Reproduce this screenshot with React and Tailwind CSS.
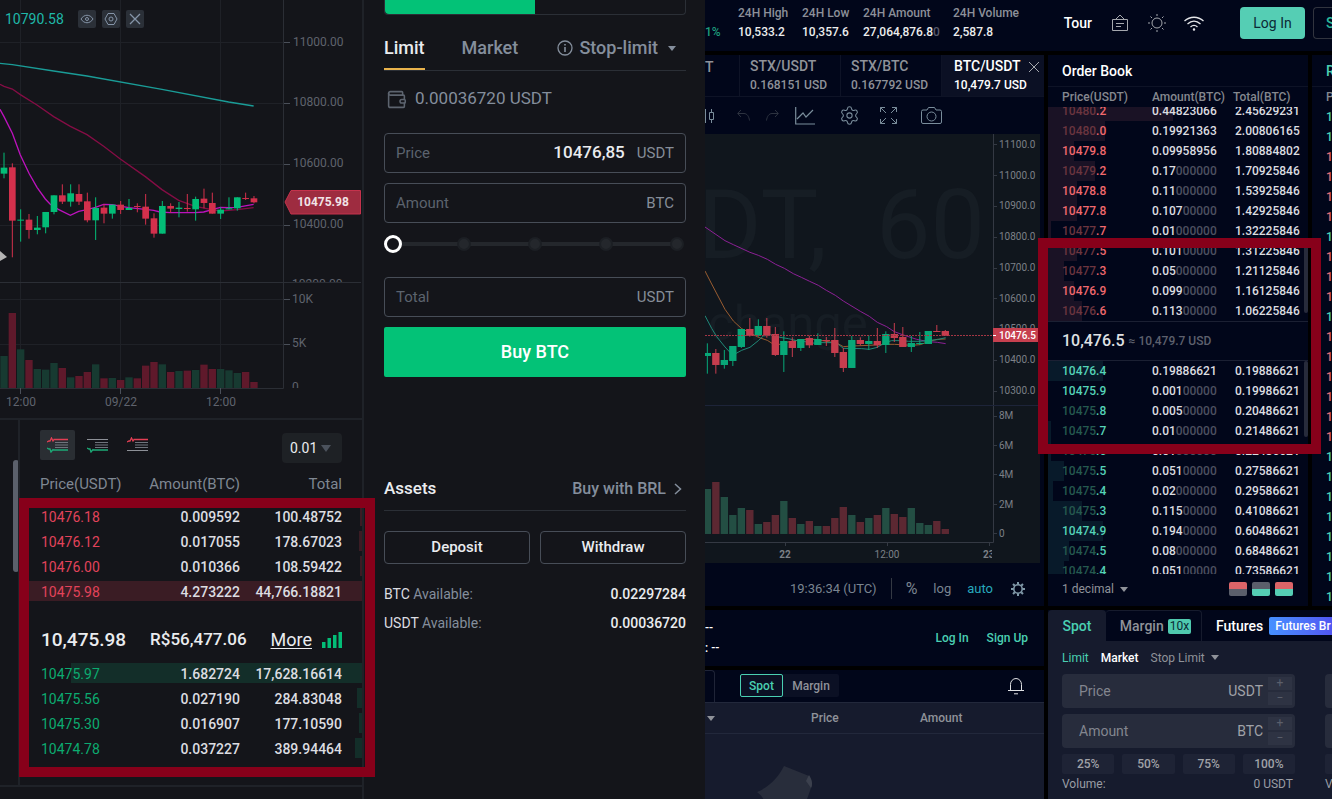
import React, { useState } from 'react';
import { Settings, Wallet } from 'lucide-react';

// [wick top, body top, body bottom, wick bottom, volume top, is up]
const spotCandles = [
  [458, 503, 521, 535, 243, 1],
  [490, 502, 662, 772, 114, 0],
  [628, 659, 662, 725, 223, 1],
  [642, 659, 690, 716, 255, 0],
  [648, 683, 690, 703, 282, 1],
  [636, 636, 682, 700, 284, 1],
  [586, 586, 636, 643, 264, 1],
  [553, 586, 605, 612, 279, 0],
  [553, 580, 605, 620, 307, 1],
  [553, 582, 605, 615, 303, 0],
  [578, 604, 661, 667, 291, 0],
  [592, 624, 661, 720, 268, 1],
  [612, 623, 641, 670, 310, 0],
  [614, 614, 641, 656, 309, 1],
  [603, 614, 630, 642, 315, 0],
  [597, 624, 630, 630, 307, 1],
  [610, 618, 621, 637, 310, 0],
  [582, 620, 656, 674, 272, 0],
  [640, 655, 701, 713, 261, 0],
  [603, 618, 701, 701, 268, 1],
  [610, 618, 626, 638, 291, 0],
  [606, 623, 627, 652, 288, 1],
  [582, 624, 627, 635, 287, 0],
  [590, 597, 628, 662, 285, 1],
  [566, 596, 609, 625, 269, 0],
  [578, 609, 641, 641, 282, 0],
  [622, 629, 641, 657, 282, 1],
  [592, 625, 628, 628, 286, 1],
  [592, 592, 625, 632, 294, 1],
  [578, 594, 597, 600, 291, 0],
  [588, 595, 607, 610, 321, 0],
];

const proCandles = [
  [460, 489, 498, 551, 267, 1],
  [477, 489, 525, 551, 246, 0],
  [480, 510, 525, 536, 291, 1],
  [468, 468, 513, 528, 345, 1],
  [417, 417, 471, 474, 324, 1],
  [384, 417, 438, 440, 330, 0],
  [388, 408, 436, 440, 372, 1],
  [384, 408, 436, 443, 366, 0],
  [411, 432, 495, 498, 345, 0],
  [424, 453, 495, 546, 303, 1],
  [442, 453, 474, 501, 354, 0],
  [447, 447, 474, 483, 372, 1],
  [437, 444, 466, 474, 363, 0],
  [430, 447, 465, 465, 378, 1],
  [441, 450, 453, 468, 378, 0],
  [414, 450, 489, 501, 354, 0],
  [474, 486, 534, 546, 321, 0],
  [438, 450, 534, 534, 345, 1],
  [442, 450, 462, 466, 366, 0],
  [436, 453, 462, 480, 354, 1],
  [414, 453, 466, 474, 345, 0],
  [424, 432, 465, 489, 324, 1],
  [399, 432, 444, 456, 342, 0],
  [411, 441, 471, 471, 351, 0],
  [438, 459, 471, 486, 324, 1],
  [426, 459, 462, 465, 369, 1],
  [423, 423, 462, 462, 375, 1],
  [405, 423, 426, 426, 363, 0],
  [420, 423, 438, 438, 387, 0],
];

// [price, amount, total, depth in percent]
const spotAsks = [
  ['10476.18', '0.009592', '100.48752', 0.6],
  ['10476.12', '0.017055', '178.67023', 1],
  ['10476.00', '0.010366', '108.59422', 0.6],
  ['10475.98', '4.273222', '44,766.18821', 100],
];

const spotBids = [
  ['10475.97', '1.682724', '17,628.16614', 85],
  ['10475.56', '0.027190', '284.83048', 1.6],
  ['10475.30', '0.016907', '177.10590', 1],
  ['10474.78', '0.037227', '389.94464', 2],
];

// [dim price, price, amount, trailing zeros, total, depth in percent]
const proAsks = [
  ['10480', '.2', '0.44823066', '', '2.45629231', 48],
  ['10480', '.0', '0.19921363', '', '2.00806165', 22],
  ['', '10479.8', '0.09958956', '', '1.80884802', 10],
  ['10479', '.2', '0.17', '000000', '1.70925846', 18],
  ['', '10478.8', '0.11', '000000', '1.53925846', 11],
  ['', '10477.8', '0.107', '00000', '1.42925846', 11],
  ['10477', '.7', '0.01', '000000', '1.32225846', 1],
  ['10477', '.5', '0.101', '00000', '1.31225846', 11],
  ['10477', '.3', '0.05', '000000', '1.21125846', 6],
  ['', '10476.9', '0.099', '00000', '1.16125846', 10],
  ['10476', '.6', '0.113', '00000', '1.06225846', 13],
];

const proBids = [
  ['', '10476.4', '0.19886621', '', '0.19886621', 21],
  ['', '10475.9', '0.001', '00000', '0.19986621', 0],
  ['10475', '.8', '0.005', '00000', '0.20486621', 0],
  ['10475', '.7', '0.01', '000000', '0.21486621', 1],
  ['10475', '.6', '0.01', '000000', '0.22486621', 1],
  ['10475', '.5', '0.051', '00000', '0.27586621', 6],
  ['10475', '.4', '0.02', '000000', '0.29586621', 2],
  ['10475', '.3', '0.115', '00000', '0.41086621', 13],
  ['', '10474.9', '0.194', '00000', '0.60486621', 21],
  ['10474', '.5', '0.08', '000000', '0.68486621', 8],
  ['10474', '.4', '0.051', '00000', '0.73586621', 6],
];

const tradeSides = 'ggrrrrgrrrgrrrrrrgggggggg'.split('');

const Caret = ({ className }) => (
  <svg className={className} width="8" height="5" viewBox="0 0 8 5" fill="currentColor" aria-hidden="true">
    <path d="M0 0h8L4 5z" />
  </svg>
);

const Candles = ({ data, start, step, width, up, down }) => (
  <g>
    {data.map(([wickTop, top, bottom, wickBottom, , isUp], i) => (
      <g key={i} fill={isUp ? up : down}>
        <rect x={start + step * i - 1.5} y={wickTop} width="3" height={wickBottom - wickTop} />
        <rect x={start + step * i - width / 2} y={top} width={width} height={bottom - top} />
      </g>
    ))}
  </g>
);

const Volumes = ({ data, start, step, base, up, down }) => (
  <g>
    {data.map((c, i) => (
      <rect key={i} x={start + step * i - 11} y={c[4]} width="22" height={base - c[4]} fill={c[5] ? up : down} />
    ))}
  </g>
);

const SpotChart = () => (
  <div className="relative">
    <svg className="block w-full h-[418px]" viewBox="0 0 362 418" preserveAspectRatio="xMaxYMin slice" fontFamily="Roboto, sans-serif" fontSize="12">
      <g stroke="#1f2127">
        {[20, 120, 220].map((x) => <path key={x} d={`M${x}.5 0V388`} />)}
        {[42, 103, 164, 225, 299, 344].map((y) => <path key={y} d={`M0 ${y}.5H283`} />)}
      </g>
      <g stroke="#2b2e35" fill="none">
        <path d="M283.5 0V388.5H0M0 282.5H361" />
      </g>
      <g stroke="#4a4f59">
        {[42, 103, 164, 225, 299, 344].map((y) => <path key={y} d={`M284 ${y}.5H290`} />)}
        {[20, 120, 220].map((x) => <path key={x} d={`M${x}.5 388V394`} />)}
      </g>
      <g transform="translate(0 275) scale(.3333)">
        <Volumes data={spotCandles} start={12} step={25} base={339} up="#173a31" down="#5f192b" />
      </g>
      <g transform="scale(.3333)">
        <g fill="none" strokeWidth="4">
          <path stroke="#1a9c97" d="M0 190 37 194 161 213 261 228 486 268 686 306 761 318" />
          <path stroke="#850d45" d="M0 253 12 259 37 267 61 284 111 315 161 350 211 379 261 404 311 439 361 477 436 530 486 569 536 601 586 619 636 629 661 633 711 629 761 623" />
          <path stroke="#bd12bd" d="M0 328 12 350 37 400 61 465 87 520 111 562 136 597 150 612 175 628 211 646 236 634 261 629 286 622 311 613 336 614 386 623 436 628 461 631 480 636 511 638 586 638 611 636 661 622 686 623 711 622 761 613" />
        </g>
        <Candles data={spotCandles} start={12} step={25} width={20} up="#03bd77" down="#d3304c" />
      </g>
      <path d="M0 251v10l7-4z" fill="#b5b5b5" />
      <g fill="#5f636d">
        <text x="293" y="46">11000.00</text>
        <text x="293" y="106">10800.00</text>
        <text x="293" y="167">10600.00</text>
        <text x="293" y="228">10400.00</text>
        <text x="292" y="303">10K</text>
        <text x="292" y="347">5K</text>
        <g textAnchor="middle">
          <text x="21" y="406">12:00</text>
          <text x="121" y="406">09/22</text>
          <text x="221" y="406">12:00</text>
        </g>
      </g>
      {/* labels cut off at the pane edges */}
      <svg x="292" y="279" width="60" height="3"><text y="9" fill="#5f636d">10200.00</text></svg>
      <svg x="292" y="380" width="20" height="8"><text y="11" fill="#5f636d">0</text></svg>
      <path d="M285 202l6-11.5h69.500v23.500H291z" fill="#9e2c40" stroke="#c5324c" />
      <text x="323" y="206" fill="#f1e3e6" fontWeight="700" textAnchor="middle">10475.98</text>
    </svg>
    <div className="absolute top-[9px] left-[5px] flex items-center text-[#8594a8]">
      <span className="w-[73px] text-sm text-[#1fb8a9]">10790.58</span>
      <button aria-label="Hide indicator" className="w-[18px] h-[18px] mr-1.5 flex items-center justify-center bg-[#2b3038] rounded-xs">
        <svg width="14" height="14" viewBox="0 0 14 14" fill="none" stroke="currentColor">
          <path d="M1 7c3-5 9-5 12 0-3 5-9 5-12 0z" />
          <circle cx="7" cy="7" r="1.500" />
        </svg>
      </button>
      <button aria-label="Indicator settings" className="w-[18px] h-[18px] mr-1.5 flex items-center justify-center bg-[#2b3038] rounded-xs">
        <svg width="14" height="14" viewBox="0 0 14 14" fill="none" stroke="currentColor">
          <path d="M4 1.500h6L13 7l-3 5.500H4L1 7z" />
          <circle cx="7" cy="7" r="2" />
        </svg>
      </button>
      <button aria-label="Remove indicator" className="w-[18px] h-[18px] flex items-center justify-center bg-[#2b3038] rounded-xs">
        <svg width="14" height="14" viewBox="0 0 14 14" fill="none" stroke="currentColor" strokeWidth="1.300">
          <path d="M2 2l10 10M12 2L2 12" />
        </svg>
      </button>
    </div>
  </div>
);

const BookIcon = ({ top, bottom }) => (
  <svg width="21" height="16" viewBox="0 0 21 16" fill="none" aria-hidden="true">
    {top ? <path d="M0 5l2-1 1 0 1.500-3 1.500 3 1-1.500h14" stroke="#e33f54" strokeWidth="1.300" /> : <path d="M0 2.500h21" stroke="#8d9097" />}
    <path d="M8 5.500h13M8 8h13M8 10.500h13" stroke="#6f747d" />
    {bottom ? <path d="M0 11l2 1 1 0 1 3 2-2.500 1 .5h14" stroke="#1cab77" strokeWidth="1.300" /> : <path d="M0 13.500h21" stroke="#8d9097" />}
  </svg>
);

const SpotRows = ({ rows, side }) => (
  <tbody>
    {rows.map(([price, amount, total, depth]) => (
      <tr key={price} className="relative h-[25px] text-[#dcdde1] font-medium">
        <td className={`pl-[21px] font-normal ${side === 'ask' ? 'text-[#e2435a]' : 'text-[#0cab70]'}`}>
          <span
            className={`absolute right-0 top-0.5 h-5 ${side === 'ask' ? 'bg-[#3a1c24]' : 'bg-[#132e29]'}`}
            style={{ width: `${depth}%` }}
          />
          <span className="relative">{price}</span>
        </td>
        <td className="text-right"><span className="relative">{amount}</span></td>
        <td className="pr-5 text-right"><span className="relative">{total}</span></td>
      </tr>
    ))}
  </tbody>
);

const SpotOrderBook = () => (
  <div className="relative flex-1 border-l-2 border-[#1f2228]">
    <div className="flex items-center h-[50px] px-5">
      <button aria-label="Full book" className="w-[35px] h-[30px] flex items-center justify-center bg-[#2a2e33] rounded-xs">
        <BookIcon top bottom />
      </button>
      <button aria-label="Bids only" className="ml-3"><BookIcon bottom /></button>
      <button aria-label="Asks only" className="ml-[19px]"><BookIcon top /></button>
      <button className="ml-auto mt-1.5 w-[60px] h-[30px] flex items-center pl-2 bg-[#1e2125] rounded-sm text-sm text-[#eaecef]">
        0.01
        <svg className="ml-1 text-[#4b525c]" width="10" height="7" viewBox="0 0 10 7" fill="currentColor"><path d="M0 0h10L5 7z" /></svg>
      </button>
    </div>
    <table className="w-full table-fixed text-sm">
      <thead>
        <tr className="h-[34px] text-[15px] text-[#7f8792] align-top">
          <th className="w-[102px] pl-5 pt-1 text-left font-normal">Price(USDT)</th>
          <th className="w-[118px] pt-1 text-right font-normal">Amount(BTC)</th>
          <th className="pr-5 pt-1 text-right font-normal">Total</th>
        </tr>
      </thead>
      <SpotRows rows={spotAsks} side="ask" />
      <tbody>
        <tr className="h-[57px] text-[#eaecef]">
          <td colSpan="3" className="pl-[21px] pr-5 pt-3.5">
            <div className="flex items-center justify-between">
              <span className="text-[19px] font-medium">10,475.98</span>
              <span className="text-[17px] font-medium">R$56,477.06</span>
              <a href="#more" className="flex items-center gap-2.5 text-lg">
                <span className="underline underline-offset-2">More</span>
                <svg width="20" height="16" viewBox="0 0 20 16" fill="#03bd77"><path d="M0 10h3.500v6H0zM5.500 6H9v10H5.500zM11 3h3.500v13H11zM16.500 0H20v16h-3.500z" /></svg>
              </a>
            </div>
          </td>
        </tr>
      </tbody>
      <SpotRows rows={spotBids} side="bid" />
    </table>
    <div className="absolute -left-px top-[78px] -right-[13px] h-[279px] z-10 border-10 border-[#87001a]" />
  </div>
);

const SpotField = ({ id, label, unit, value }) => (
  <div className="flex items-center h-10 px-[11px] border border-[#474d57] rounded-sm text-[15px]">
    <label htmlFor={id} className="w-16 text-[#5c636e]">{label}</label>
    <input id={id} defaultValue={value} className="flex-1 min-w-0 bg-transparent text-right text-[17px] font-medium text-[#eaecef] outline-none" />
    <span className="ml-3 text-[#868d98]">{unit}</span>
  </div>
);

const SpotForm = () => {
  const [percent, setPercent] = useState(0);

  return (
    <section className="w-[341px] shrink-0 pl-5 pr-[19px] text-[#848e9c] bg-[#14151a]">
      <div className="flex h-[15px] border border-t-0 border-[#2b2f36] rounded-b-sm">
        <button aria-label="Buy" className="w-1/2 bg-[#03c277] rounded-bl-sm" />
        <button aria-label="Sell" className="w-1/2" />
      </div>

      <div className="flex items-start h-14 pt-[19px] border-b border-[#2b2f36] text-lg font-medium">
        <button className="h-9 pb-1.5 border-b-2 border-[#e9b34c] text-[#eaecef]">Limit</button>
        <button className="ml-[37px] h-9 pb-2">Market</button>
        <button className="ml-auto mr-2.5 h-9 pb-2 flex items-center">
          <svg className="mr-1.5" width="16" height="16" viewBox="0 0 16 16" fill="none" stroke="currentColor" strokeWidth="1.300">
            <circle cx="8" cy="8" r="7" />
            <path d="M8 7v5M8 4v1.500" strokeWidth="1.600" />
          </svg>
          Stop-limit
          <Caret className="ml-2.5" />
        </button>
      </div>

      <div className="flex items-center h-[62px] pb-1.5 pl-0.5 gap-2 text-[17px]">
        <Wallet className="text-[#5d646f]" size={21} strokeWidth={1.8} />
        0.00036720 USDT
      </div>

      <div className="flex flex-col gap-2.5">
        <SpotField id="spot-price" label="Price" unit="USDT" value="10476,85" />
        <SpotField id="spot-amount" label="Amount" unit="BTC" />
        <div className="relative flex items-center justify-between h-[22px] mb-3 px-0.5">
          <div className="absolute inset-x-1 h-1 bg-[#24272c]" />
          {[0, 25, 50, 75, 100].map((step) => (
            <span key={step} className="relative w-3.5 h-3.5 bg-[#24272c] border-2 border-[#1c1f24] rounded-full" />
          ))}
          <input
            type="range"
            aria-label="Percent of balance"
            value={percent}
            onChange={(e) => setPercent(Number(e.target.value))}
            className="absolute inset-x-0 w-full h-[18px] appearance-none bg-transparent [&::-webkit-slider-thumb]:appearance-none [&::-webkit-slider-thumb]:w-[18px] [&::-webkit-slider-thumb]:h-[18px] [&::-webkit-slider-thumb]:rounded-full [&::-webkit-slider-thumb]:border-3 [&::-webkit-slider-thumb]:border-white [&::-webkit-slider-thumb]:bg-[#14151a]"
          />
        </div>
        <SpotField id="spot-total" label="Total" unit="USDT" />
        <button className="h-[50px] bg-[#03c277] rounded-xs text-lg font-medium text-white">Buy BTC</button>
      </div>

      <div className="flex items-center justify-between h-11 mt-[90px] border-b border-[#2b2f36] font-medium">
        <h2 className="text-[17px] text-[#eaecef]">Assets</h2>
        <a href="#buy" className="flex items-center mr-1 gap-2 text-base">
          Buy with BRL
          <svg width="8" height="12" viewBox="0 0 8 12" fill="none" stroke="currentColor" strokeWidth="1.500"><path d="M1 1l5.500 5L1 11" /></svg>
        </a>
      </div>
      <div className="grid grid-cols-2 gap-2.5 mt-5 text-[15px] font-medium text-[#eaecef]">
        <button className="h-[33px] border border-[#474d57] rounded-sm">Deposit</button>
        <button className="h-[33px] border border-[#474d57] rounded-sm">Withdraw</button>
      </div>
      <dl className="mt-4 text-sm leading-[29px]">
        <div className="flex justify-between">
          <dt><span className="text-[#dcdde1]">BTC</span> Available:</dt>
          <dd className="font-medium text-[#eaecef]">0.02297284</dd>
        </div>
        <div className="flex justify-between">
          <dt><span className="text-[#dcdde1]">USDT</span> Available:</dt>
          <dd className="font-medium text-[#eaecef]">0.00036720</dd>
        </div>
      </dl>
    </section>
  );
};

const Stat = ({ className, label, children }) => (
  <div className={className}>
    <div className="text-[#8c9099]">{label}</div>
    <div className="text-[#eceded]">{children}</div>
  </div>
);

const ProHeader = () => (
  <header className="flex items-center h-[51px] shrink-0 bg-[#01061a] text-xs font-medium">
    <div className="flex pb-1.5 leading-[19px]">
      <div className="w-[33px] pt-[19px] text-[#1d9c7c]">1%</div>
      <Stat className="w-16" label="24H High">10,533.2</Stat>
      <Stat className="w-[61px]" label="24H Low">10,357.6</Stat>
      <Stat className="w-[90px]" label="24H Amount">27,064,876.8<span className="text-[#55586a]">0</span></Stat>
      <Stat className="w-[70px]" label="24H Volume">2,587.8</Stat>
    </div>
    <nav className="ml-auto flex items-center pb-[5px] text-[#a5a8ae]">
      <a href="#tour" className="mr-5 text-sm text-white">Tour</a>
      <button aria-label="Notices" className="mr-5">
        <svg width="16" height="18" viewBox="0 0 16 18" fill="none" stroke="currentColor"><path d="M.5 5.500h15v11H.5zM3.500 5.500L8 1l4.500 4.500M4 9.500h8M4 12.500h5" /></svg>
      </button>
      <button aria-label="Theme" className="mr-[18px]">
        <svg width="18" height="18" viewBox="0 0 18 18" fill="none" stroke="currentColor">
          <circle cx="9" cy="9" r="5" />
          <path d="M9 0v2M9 16v2M0 9h2M16 9h2M2.500 2.500l1.500 1.500M14 14l1.500 1.500M2.500 15.500L4 14M14 4l1.500-1.500" />
        </svg>
      </button>
      <button aria-label="Connection" className="mr-9">
        <svg width="20" height="15" viewBox="0 0 20 15" fill="none" stroke="#e5e6e9" strokeWidth="1.300">
          <path d="M.5 5c5.500-5 13.500-5 19 0M3.500 8c4-3.700 9-3.700 13 0M6.500 11c2.200-2 4.800-2 7 0" />
          <circle cx="10" cy="13.500" r=".6" />
        </svg>
      </button>
      <button className="w-[65px] h-8 mr-2 bg-[#55ceb4] rounded-sm text-sm font-normal text-[#0b2a35]">Log In</button>
      <button className="w-[19px] h-8 pl-3 border border-r-0 border-[#31343f] rounded-l-sm text-left text-sm text-[#2bb79c]">S</button>
    </nav>
  </header>
);

const PairTab = ({ name, price, active }) => (
  <button className={`flex flex-col justify-center pl-2.5 text-left border-l border-[#0e1326] ${active ? 'w-[103px] pl-3 bg-[#0b1024] text-white' : 'w-[101px] text-[#8f9299]'}`}>
    <span className="text-sm leading-[19px]">{name}</span>
    <span className="text-xs leading-[19px]">{price}</span>
  </button>
);

const ProToolbar = () => (
  <div className="flex items-center h-[37px] text-[#7a8d9b]">
    <svg width="10" height="14" viewBox="0 0 10 14" fill="none" stroke="currentColor"><path d="M.5 0v14M6.500 0v3M6.500 11v3M4.500 3.500h4v7h-4z" /></svg>
    <div className="flex gap-4 ml-[22px] text-[#2d3340]">
      <button aria-label="Undo">
        <svg width="13" height="11" viewBox="0 0 13 11" fill="none" stroke="currentColor"><path d="M4 0L.7 3.500 4 7M1 3.500h6c3 0 5 3 5.500 7" /></svg>
      </button>
      <button aria-label="Redo">
        <svg width="13" height="11" viewBox="0 0 13 11" fill="none" stroke="currentColor"><path d="M9 0l3.300 3.500L9 7M12 3.500H6C3 3.500 1 6.500.5 10.500" /></svg>
      </button>
    </div>
    <button aria-label="Indicators" className="ml-4">
      <svg width="20" height="18" viewBox="0 0 20 18" fill="none" stroke="currentColor"><path d="M.7 0v17H20M2 12l6-6 3 4 7-7" strokeWidth="1.200" /></svg>
    </button>
    <button aria-label="Chart settings" className="ml-6"><Settings size={21} strokeWidth={1.2} /></button>
    <button aria-label="Full screen" className="ml-5">
      <svg width="17" height="17" viewBox="0 0 17 17" fill="none" stroke="currentColor"><path d="M.5 5V.5H5M.5.5L6 6M12 .5h4.500V5M16.500.5L11 6M.5 12v4.500H5M.5 16.500L6 11M12 16.500h4.500V12M16.500 16.500L11 11" /></svg>
    </button>
    <button aria-label="Take snapshot" className="ml-6">
      <svg width="21" height="17" viewBox="0 0 21 17" fill="none" stroke="currentColor"><path d="M2 3h4l1.500-2.500h6L15 3h4q1.500 0 1.500 1.500v10.500q0 1.500-1.500 1.500H2Q.5 16.500.5 15V4.500Q.5 3 2 3z" /><circle cx="10.500" cy="9.500" r="4.500" /></svg>
    </button>
  </div>
);

const ProChart = () => (
  <div className="mr-1 bg-[#10161d]">
    <svg className="block w-full h-[429px]" viewBox="0 0 335 429" preserveAspectRatio="xMaxYMin slice" fontFamily="Roboto, sans-serif" fontSize="10">
      <g fill="#161d24">
        <text x="-7" y="124" fontSize="97">DT,</text>
        <text x="171" y="124" fontSize="97">60</text>
        <text x="3" y="206" fontSize="49">change</text>
      </g>
      <g stroke="#343943" fill="none">
        <path d="M288.500 0V408.500H0" />
        {[10, 41, 72, 103, 134, 164, 226, 257, 282, 311, 340, 370, 399].map((y) => <path key={y} d={`M289 ${y}.5h3`} />)}
        {[80, 182, 284].map((x) => <path key={x} d={`M${x}.5 409v3`} />)}
      </g>
      <path d="M0 271.500H335" stroke="#1d2439" />
      <g transform="translate(-5 266) scale(.3333)">
        <Volumes data={proCandles} start={22} step={25.5} base={402} up="#234e43" down="#5c2832" />
      </g>
      <g transform="translate(-5 56) scale(.3333)">
        <g fill="none" strokeWidth="3">
          <path stroke="#8d2096" d="M15 111 75 152 100 164 150 187 175 196 202 208 227 223 253 235 280 251 304 262 329 274 355 286 379 301 406 316 430 333 481 364 508 379 532 397 560 410 583 425 610 435 650 448 685 455 712 457 737 461" />
          <path stroke="#9a5c30" d="M15 243 35 282 75 358 100 393 125 416 150 428 175 442 202 451 227 467 253 458 304 449 345 448 390 456 412 460 430 470 457 468 508 466 560 463 583 463 634 466 661 464 685 455 712 448 737 447" />
          <path stroke="#208977" d="M15 377 35 415 50 440 75 471 90 487 105 492 125 481 150 472 175 452 190 438 215 434 240 442 265 446 290 452 315 455 345 460 355 458 400 458 415 463 430 475 485 476 508 478 532 472 555 458 575 452 610 452 625 454 661 454 690 451 712 449 737 443" />
        </g>
        <Candles data={proCandles} start={22} step={25.5} width={22} up="#08a878" down="#c63d4e" />
      </g>
      <path d="M0 201.500H288" stroke="#a33644" strokeDasharray="2 1" />
      <g fill="#7c8087">
        <text x="294" y="14">11100.0</text>
        <text x="294" y="45">11000.0</text>
        <text x="294" y="75">10900.0</text>
        <text x="294" y="106">10800.0</text>
        <text x="294" y="137">10700.0</text>
        <text x="294" y="168">10600.0</text>
        <svg x="294" y="188" width="40" height="6"><text y="10">10500.0</text></svg>
        <text x="294" y="229">10400.0</text>
        <text x="294" y="260">10300.0</text>
        <text x="294" y="285">8M</text>
        <text x="294" y="315">6M</text>
        <text x="294" y="344">4M</text>
        <text x="294" y="374">2M</text>
        <text x="294" y="403">0</text>
        <text x="80" y="424" textAnchor="middle" fontWeight="700">22</text>
        <text x="182" y="424" textAnchor="middle">12:00</text>
        <svg x="278" y="412" width="9" height="14"><text y="12" fontWeight="700">23</text></svg>
      </g>
      <rect x="288" y="194" width="45" height="14" fill="#c7404f" />
      <path d="M288 201.500h3" stroke="#fff" />
      <text x="294" y="205" fill="#fff" fontWeight="500">10476.5</text>
    </svg>
  </div>
);

const ProRows = ({ rows, side }) => (
  <table className="w-full table-fixed text-xs font-medium">
    <tbody>
      {rows.map(([dim, price, amount, zeros, total, depth]) => (
        <tr key={dim + price} className="relative h-5 text-[#dcdde0]">
          <td className={`w-[104px] pl-3.5 ${side === 'ask' ? 'text-[#f0696e]' : 'text-[#55d3b8]'}`}>
            <span
              className={`absolute left-0 inset-y-0 ${side === 'ask' ? 'bg-[#1a1225]' : 'bg-[#081a2a]'}`}
              style={{ width: `${depth}%` }}
            />
            <span className="relative">
              <span className={side === 'ask' ? 'text-[#6b353f]' : 'text-[#25594f]'}>{dim}</span>
              {price}
            </span>
          </td>
          <td className="relative w-[83px]">
            {amount}
            <span className="text-[#4d5060]">{zeros}</span>
          </td>
          <td>{total}</td>
        </tr>
      ))}
    </tbody>
  </table>
);

const ProOrderBook = () => (
  <section className="relative w-[260px] shrink-0 bg-[#01061a] text-xs">
    <h2 className="h-8 px-3.5 leading-8 border-b border-[#0e1326] text-sm font-medium text-white">Order Book</h2>
    <div className="flex h-5 px-3.5 leading-5 font-medium text-[#85888f]">
      <span className="w-[90px]">Price(USDT)</span>
      <span className="w-[81px]">Amount(BTC)</span>
      <span>Total(BTC)</span>
    </div>
    <div className="relative flex flex-col justify-end h-[214px] overflow-hidden">
      <div className="shrink-0"><ProRows rows={proAsks} side="ask" /></div>
      <div className="absolute right-0 bottom-2 w-1 h-[74px] bg-[#272b3b] rounded-full" />
    </div>
    <div className="flex items-center h-10 px-3.5 border-y border-[#1b2033] font-medium">
      <span className="text-base text-[#dfe0e3]">10,476.5</span>
      <span className="ml-1 text-[#5d606d]">≈ 10,479.7 USD</span>
    </div>
    <div className="relative h-[213px] overflow-hidden">
      <ProRows rows={proBids} side="bid" />
      <div className="absolute right-0 top-0 w-1 h-[76px] bg-[#272b3b] rounded-full" />
    </div>
    <div className="flex items-center h-[30px] pl-3.5 pr-[15px] text-[#8f9299]">
      <button className="flex items-center gap-1.5">1 decimal <Caret /></button>
      <div className="ml-auto flex gap-[5px]">
        <button aria-label="Asks" className="w-[18px] h-3.5 bg-linear-to-b from-[#dc6468] from-50% to-[#5b5f6b] to-50% rounded-xs" />
        <button aria-label="Bids" className="w-[18px] h-3.5 bg-linear-to-b from-[#5b5f6b] from-50% to-[#55ceb4] to-50% rounded-xs" />
        <button aria-label="Both" className="w-[18px] h-3.5 bg-linear-to-b from-[#dc6468] from-50% to-[#55ceb4] to-50% rounded-xs" />
      </div>
    </div>
    <div className="absolute -left-2.5 top-[183px] -right-[13px] h-[216px] z-10 border-10 border-[#87001a]" />
  </section>
);

const ProField = ({ id, label, unit }) => (
  <div className="flex items-center h-[34px] pl-[17px] pr-[3px] bg-[#272c3c] rounded-sm text-sm">
    <label htmlFor={id} className="text-[#83868f]">{label}</label>
    <input id={id} className="flex-1 min-w-0 bg-transparent text-right text-white outline-none" />
    <span className="text-[#a0a2a8]">{unit}</span>
    <div className="ml-[5px] flex flex-col gap-0.5 text-xs leading-[13px] text-[#5b5f6b]">
      <button className="w-6 h-[13px] bg-[#2e3343]" aria-label={`Increase ${label}`}>+</button>
      <button className="w-6 h-[13px] bg-[#2e3343]" aria-label={`Decrease ${label}`}>−</button>
    </div>
  </div>
);

const ProForm = () => (
  <section className="flex-1 flex flex-col bg-[#161b2d] overflow-hidden">
    <div className="flex h-[31px] bg-[#01061a] text-sm font-medium">
      <button className="w-[58px] bg-[#161b2d] rounded-t-sm text-[#4acfb2]">Spot</button>
      <button className="w-24 flex items-center justify-center gap-1 pl-1 border-t border-r border-[#161b2d] rounded-t-sm text-[#8f9299]">
        Margin
        <span className="px-0.5 h-[15px] leading-[15px] bg-[#4fc9ae] rounded-xs text-xs font-normal text-[#0b2a35]">10x</span>
      </button>
      <div className="flex-1 flex items-center pl-3.5 gap-1.5 whitespace-nowrap text-white">
        <button>Futures</button>
        <a href="#futures" className="flex-1 h-[18px] pl-1.5 leading-[18px] bg-linear-to-r from-[#4590ff] to-[#5156f2] rounded-l-xs text-xs">Futures Br</a>
      </div>
    </div>
    <div className="flex justify-between">
      <div className="w-[247px] pl-3.5 text-xs">
        <div className="flex items-center h-[33px] gap-3 text-[#8f9299]">
          <button className="text-[#4acfb2]">Limit</button>
          <button className="font-medium text-white">Market</button>
          <button className="flex items-center gap-1.5">Stop Limit <Caret /></button>
        </div>
        <div className="flex flex-col gap-1.5">
          <ProField id="pro-price" label="Price" unit="USDT" />
          <ProField id="pro-amount" label="Amount" unit="BTC" />
        </div>
        <div className="grid grid-cols-4 gap-2 mt-1.5 font-medium text-[#a0a2a8]">
          <button className="h-5 bg-[#1e2335] rounded-xs">25%</button>
          <button className="h-5 bg-[#1e2335] rounded-xs">50%</button>
          <button className="h-5 bg-[#1e2335] rounded-xs">75%</button>
          <button className="h-5 bg-[#1e2335] rounded-xs">100%</button>
        </div>
        <div className="flex justify-between h-5 pr-0.5 leading-5 text-[#9a9da4]">
          <span>Volume:</span>
          <span>0 USDT</span>
        </div>
      </div>
      {/* sell side, mostly off screen */}
      <div className="w-[7px] pt-[33px] text-xs text-[#9a9da4]">
        <div className="h-[34px] mb-1.5 bg-[#272c3c] rounded-l-sm" />
        <div className="h-[34px] mb-1.5 bg-[#272c3c] rounded-l-sm" />
        <div className="h-5 bg-[#1e2335] rounded-l-xs" />
        <div className="h-5 leading-5">V</div>
      </div>
    </div>
  </section>
);

const App = () => (
  <div className="flex h-screen overflow-hidden bg-[#14151a] font-[Roboto,sans-serif]">
    <section className="w-[364px] shrink-0 flex flex-col border-r-2 border-[#1f2228]">
      <SpotChart />
      <div className="flex h-[369px] border-y-2 border-[#1f2228]">
        <div className="w-[18px] pt-10">
          <div className="ml-[13px] w-1.5 h-28 bg-[#5b606b] rounded-full" />
        </div>
        <SpotOrderBook />
      </div>
    </section>

    <SpotForm />

    <section className="flex-1 min-w-0 flex flex-col gap-1 bg-black overflow-hidden">
      <ProHeader />
      <div className="flex-1 flex gap-1 min-h-0">
        <div className="flex-1 min-w-0 flex flex-col gap-1">
          <div className="bg-[#01061a]">
            <div className="flex justify-end h-[42px] border-b border-[#0e1326] overflow-hidden font-medium">
              <span className="flex-1 pt-0.5 text-sm text-[#8f9299]">T</span>
              <PairTab name="STX/USDT" price="0.168151 USD" />
              <PairTab name="STX/BTC" price="0.167792 USD" />
              <div className="relative flex">
                <PairTab name="BTC/USDT" price="10,479.7 USD" active />
                <button aria-label="Close tab" className="absolute top-1.5 right-1 text-[#a5a8ae]">
                  <svg width="12" height="12" viewBox="0 0 12 12" stroke="currentColor"><path d="M1 1l10 10M11 1L1 11" /></svg>
                </button>
              </div>
            </div>
            <ProToolbar />
            <ProChart />
            <div className="flex items-center justify-end h-[43px] pt-2 pr-[19px] text-[13px] text-[#7a8490]">
              <span className="pr-3.5">19:36:34 (UTC)</span>
              <span className="h-[21px] border-l border-[#343943]" />
              <button className="ml-3.5 text-base">%</button>
              <button className="ml-4">log</button>
              <button className="ml-4 text-[#27a9bd]">auto</button>
              <button aria-label="Scale settings" className="ml-[18px]">
                <svg width="14" height="14" viewBox="0 0 14 14" fill="none" stroke="#8099a8">
                  <circle cx="7" cy="7" r="4.200" strokeWidth="1.600" />
                  <path d="M7 0v2.500M7 11.500V14M0 7h2.500M11.500 7H14M2 2l1.800 1.800M10.200 10.200L12 12M2 12l1.800-1.800M10.200 3.800L12 2" strokeWidth="2" />
                </svg>
              </button>
            </div>
          </div>

          <div className="flex items-center justify-between h-14 shrink-0 pr-4 bg-[#01061a] text-xs font-medium">
            <div className="leading-5 text-white">
              <div>--</div>
              <div>: --</div>
            </div>
            <div className="flex gap-[18px] text-[#4acfb2]">
              <a href="#login">Log In</a>
              <a href="#signup">Sign Up</a>
            </div>
          </div>

          <div className="flex-1 flex flex-col bg-[#161b2d] text-xs font-medium text-[#8f9299] overflow-hidden">
            <div className="flex h-8 shrink-0 bg-[#01061a]">
              <div className="w-2.5 border-t border-r border-[#1f2437] rounded-tr-sm" />
              <div className="flex h-[23px] mt-1 ml-[25px] bg-[#0b1024] rounded-xs">
                <button className="w-[43px] border border-[#4acfb2] rounded-xs text-[#4acfb2]">Spot</button>
                <button className="w-14">Margin</button>
              </div>
              <button aria-label="Alerts" className="ml-auto mr-5">
                <svg width="16" height="17" viewBox="0 0 16 17" fill="none" stroke="#e0e1e4"><path d="M0 12.500h16M2.500 12.500V6.500a5.500 6 0 0 1 11 0v6M6 15.800h4" /></svg>
              </button>
            </div>
            <div className="flex items-center justify-end h-8 shrink-0 border-y border-[#22283b]">
              <Caret className="ml-0.5 mr-auto" />
              <span className="w-[109px]">Price</span>
              <span className="w-[124px]">Amount</span>
            </div>
            <svg className="ml-[52px] mt-8 shrink-0" width="66" height="36" viewBox="0 0 66 36">
              <path d="M0 26C14 20 22 10 27 0l25 10c3 4 4 8 2 12l-5 14H8C6 32 4 29 0 26z" fill="#282d3b" />
              <path d="M49 15l3-6c3 5 4 9 2 13z" fill="#3b404d" />
            </svg>
          </div>
        </div>

        <div className="w-[284px] shrink-0 flex flex-col gap-1">
          <div className="flex gap-1 h-[551px]">
            <ProOrderBook />
            <div className="flex-1 pl-3.5 bg-[#01061a] overflow-hidden text-xs font-medium">
              <div className="h-8 -ml-3.5 pl-3.5 leading-8 border-b border-[#0e1326] text-sm text-[#4acfb2]">R</div>
              <div className="h-5 leading-5 text-[#85888f]">P</div>
              {tradeSides.map((side, i) => (
                <div key={i} className={`h-5 leading-5 ${side === 'g' ? 'text-[#4acfb2]' : 'text-[#e0686e]'}`}>1</div>
              ))}
            </div>
          </div>
          <ProForm />
        </div>
      </div>
    </section>
  </div>
);

export default App;
